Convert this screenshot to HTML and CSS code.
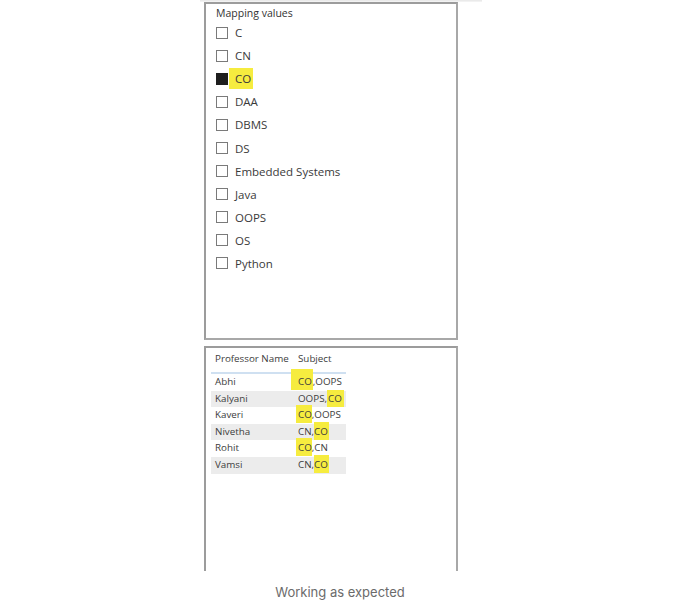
FILE: index.html
```html
<!DOCTYPE html>
<html>
<head>
<meta charset="utf-8">
<link rel="stylesheet" href="styles.css">
</head>
<body>
<div class="shot">
  <div class="topband"></div>
  <div class="panel slicer">
    <div class="slicer-title">Mapping values</div>
    <ul class="items">
      <li><span class="box"></span><span>C</span></li>
      <li><span class="box"></span><span>CN</span></li>
      <li><span class="box checked"></span><span class="hl hl-co">CO</span></li>
      <li><span class="box"></span><span>DAA</span></li>
      <li><span class="box"></span><span>DBMS</span></li>
      <li><span class="box"></span><span>DS</span></li>
      <li><span class="box"></span><span>Embedded Systems</span></li>
      <li><span class="box"></span><span>Java</span></li>
      <li><span class="box"></span><span>OOPS</span></li>
      <li><span class="box"></span><span>OS</span></li>
      <li><span class="box"></span><span>Python</span></li>
    </ul>
  </div>
  <div class="panel tablepanel">
    <table class="grid">
      <thead>
        <tr><th class="c1">Professor Name</th><th class="c2">Subject</th></tr>
      </thead>
      <tbody>
        <tr><td>Abhi</td><td><span class="mk mk-a">CO</span>,OOPS</td></tr>
        <tr class="alt"><td>Kalyani</td><td>OOPS,<span class="mk mk-b">CO</span></td></tr>
        <tr><td>Kaveri</td><td><span class="mk mk-c">CO</span>,OOPS</td></tr>
        <tr class="alt"><td>Nivetha</td><td>CN,<span class="mk mk-d">CO</span></td></tr>
        <tr><td>Rohit</td><td><span class="mk mk-c">CO</span>,CN</td></tr>
        <tr class="alt"><td>Vamsi</td><td>CN,<span class="mk mk-d">CO</span></td></tr>
      </tbody>
    </table>
  </div>
</div>
<p class="caption">Working as expected</p>
</body>
</html>
```
FILE: styles.css
```css
html, body {
  margin: 0;
  padding: 0;
  background: #ffffff;
}
body {
  width: 680px;
  height: 601px;
  overflow: hidden;
}
.shot {
  height: 571px;
  overflow: hidden;
}
.topband {
  height: 2px;
  width: 282px;
  margin-left: 200px;
  background: linear-gradient(to bottom, #e6e6e6, #f6f6f6);
}
.panel {
  margin-left: 204px;
  width: 250px;
  border: 2px solid #a3a3a3;
  border-color: #9c9c9c #a8a8a8 #a8a8a8 #9c9c9c;
  background: #fff;
  font-family: "Open Sans", "Noto Sans", sans-serif;
}
.slicer {
  height: 332px;
  padding-top: 2px;
  box-sizing: content-box;
}
.slicer-title {
  margin-left: 10px;
  font-size: 10.5px;
  line-height: 14px;
  color: #333;
}
.items {
  list-style: none;
  margin: 1px 0 0 0;
  padding: 0 0 0 10px;
}
.items li {
  display: flex;
  align-items: center;
  height: 23.1px;
  font-size: 11.5px;
  color: #3a3a3a;
}
.box {
  width: 10px;
  height: 10px;
  border: 1px solid #7a7a7a;
  margin-right: 7px;
  flex: none;
}
.box.checked {
  background: #1e1e1e;
  border-color: #1e1e1e;
}
.hl {
  background: #f6ec3f;
  padding: 3px 2px 3px 6px;
  margin-left: -6px;
}
.tablepanel {
  margin-top: 6px;
  height: 300px;
}
.grid {
  border-collapse: collapse;
  margin: 0 0 0 5px;
  font-size: 9.8px;
  color: #3c3c3c;
}
.grid th {
  font-weight: normal;
  text-align: left;
  padding: 4px 0 0 4px;
  height: 20px;
  vertical-align: top;
  line-height: 14px;
  border-bottom: 2px solid #cfe0f1;
}
.grid th.c1 {
  width: 79px;
}
.grid th.c2 {
  width: 48px;
}
.grid td {
  height: 16.6px;
  padding: 0 0 0 4px;
  line-height: 16.6px;
  white-space: nowrap;
}
.grid tr.alt td {
  background: #ececec;
}
.mk {
  background: #f6ec3f;
  padding: 3px 0;
}
.mk-a {
  padding: 6px 1px 2px 7px;
  margin-left: -7px;
}
.mk-b {
  padding: 2px 2px 2px 1px;
}
.mk-c {
  padding: 3px 0 2px 2px;
  margin-left: -2px;
}
.mk-d {
  padding: 3px 1px 2px 0;
}
.caption {
  margin: 0;
  text-align: center;
  font-family: "Inter", "Noto Sans", sans-serif;
  font-size: 13px;
  line-height: 20px;
  padding-top: 11px;
  color: #6b6b6b;
}
```
